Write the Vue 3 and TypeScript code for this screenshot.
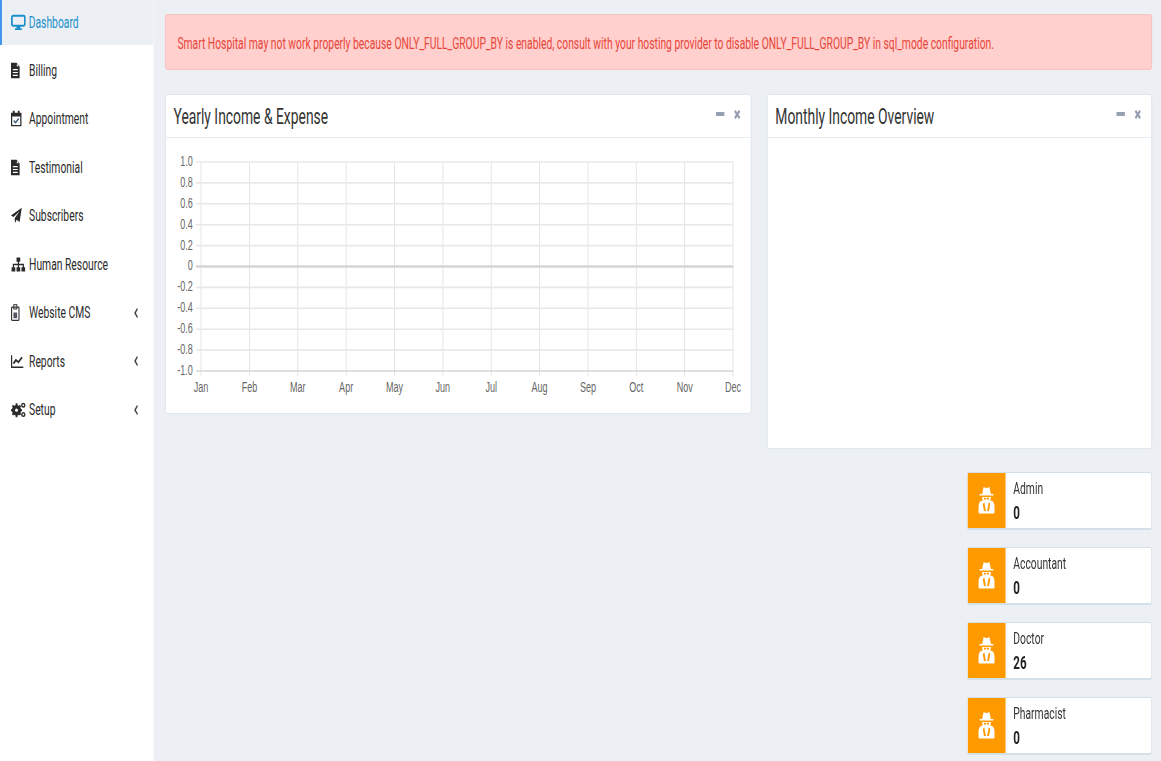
<script setup lang="ts">
const S = 0.645
const px = (x: number) => x / S
type Item = { label: string; icon: string; arrow?: boolean; active?: boolean }
const menu: Item[] = [
  { label: 'Dashboard', icon: 'desktop', active: true },
  { label: 'Billing', icon: 'file' },
  { label: 'Appointment', icon: 'calendar' },
  { label: 'Testimonial', icon: 'file' },
  { label: 'Subscribers', icon: 'plane' },
  { label: 'Human Resource', icon: 'sitemap' },
  { label: 'Website CMS', icon: 'badge', arrow: true },
  { label: 'Reports', icon: 'chart', arrow: true },
  { label: 'Setup', icon: 'gears', arrow: true }
]
const stats = [
  { label: 'Admin', value: '0' },
  { label: 'Accountant', value: '0' },
  { label: 'Doctor', value: '26' },
  { label: 'Pharmacist', value: '0' }
]
const months = ['Jan', 'Feb', 'Mar', 'Apr', 'May', 'Jun', 'Jul', 'Aug', 'Sep', 'Oct', 'Nov', 'Dec']
const yLabels = ['1.0', '0.8', '0.6', '0.4', '0.2', '0', '-0.2', '-0.4', '-0.6', '-0.8', '-1.0']
const x0 = px(201 - 165.7)
const xStep = px(48.36)
const y0 = 24
const yStep = 20.9
const monthX = months.map((m, i) => ({ m, x: x0 + i * xStep }))
const labelY = yLabels.map((t, i) => ({ t, y: y0 + i * yStep }))
const xEnd = x0 + 11 * xStep
const yEnd = y0 + 10 * yStep
const tickLeft = px(196 - 165.7)
</script>

<template>
  <div class="viewport">
    <div class="page">
      <aside class="sidebar">
        <a v-for="item in menu" :key="item.label" class="nav" :class="{ active: item.active }">
          <svg class="nav-icon" viewBox="0 0 24 24" preserveAspectRatio="none">
            <template v-if="item.icon === 'desktop'">
              <rect x="1.500" y="2.500" width="21" height="14" rx="2" fill="none" stroke="currentColor" stroke-width="2.800" />
              <path d="M9 17h6v3h2.500v2.500h-11V20H9z" fill="currentColor" />
            </template>
            <template v-else-if="item.icon === 'file'">
              <path fill-rule="evenodd" fill="currentColor" d="M0 1h9l5 5v17H0zM3 10v1.600h8V10zM3 14v1.600h8V14zM3 18v1.600h8V18zM9.500 2.500V6H13z" />
            </template>
            <template v-else-if="item.icon === 'calendar'">
              <path fill-rule="evenodd" fill="currentColor" d="M0 4h3V1h3v3h5V1h3v3h3v19H0zM2 9v12h13V9z" />
              <path d="M4.500 15l3 3 5-6" fill="none" stroke="#33526e" stroke-width="2" />
            </template>
            <template v-else-if="item.icon === 'plane'">
              <path fill="currentColor" d="M17.500 1 14 21l-5-3-2.500 5-.5-7L14 6 4 14l-4-2z" />
            </template>
            <template v-else-if="item.icon === 'sitemap'">
              <path fill="currentColor" d="M9 2h6v6h-2v3h8v5h2v6h-6v-6h2v-3h-6v3h2v6H9v-6h2v-3H5v3h2v6H1v-6h2v-5h8V8H9z" />
            </template>
            <template v-else-if="item.icon === 'badge'">
              <rect x="1" y="4.500" width="12" height="18.500" rx="1" fill="none" stroke="#333" stroke-width="1.800" />
              <rect x="4.500" y="1" width="5" height="6" fill="none" stroke="#333" stroke-width="1.500" />
              <path fill="#556" d="M4 12h6v8H4z" />
            </template>
            <template v-else-if="item.icon === 'chart'">
              <path fill="currentColor" d="M0 3h2v16h18v2H0z" />
              <path d="M4 15l4-5 4 3 6-7" fill="none" stroke="currentColor" stroke-width="2.600" />
            </template>
            <template v-else>
              <circle cx="9" cy="13" r="5.500" fill="none" stroke="currentColor" stroke-width="4" />
              <path d="M9 3v20M0 13h18M2.500 6.500l13 13M15.500 6.500l-13 13" stroke="currentColor" stroke-width="3" />
              <circle cx="9" cy="13" r="2.300" fill="#fff" />
              <circle cx="20" cy="6" r="2.500" fill="none" stroke="currentColor" stroke-width="2.200" />
              <circle cx="20" cy="19" r="2.500" fill="none" stroke="currentColor" stroke-width="2.200" />
            </template>
          </svg>
          <span class="nav-label">{{ item.label }}</span>
          <svg v-if="item.arrow" class="nav-arrow" viewBox="0 0 10 14">
            <path d="M7.500 2 3 7l4.500 5" fill="none" stroke="currentColor" stroke-width="2.200" />
          </svg>
        </a>
      </aside>

      <main class="content">
        <div class="alert">Smart Hospital may not work properly because ONLY_FULL_GROUP_BY is enabled, consult with your hosting provider to disable ONLY_FULL_GROUP_BY in sql_mode configuration.</div>

        <div class="columns">
          <section class="box box-yearly">
            <header class="box-head">
              <h3>Yearly Income &amp; Expense</h3>
              <div class="tools">
                <span class="minus"></span>
                <svg class="times" viewBox="0 0 12 12"><path d="M2 2l8 8M10 2l-8 8" stroke="currentColor" stroke-width="3.200" /></svg>
              </div>
            </header>
            <svg class="chart" viewBox="0 0 906 276">
              <line v-for="p in monthX" :key="p.m" :x1="p.x" :x2="p.x" :y1="y0" :y2="yEnd + 5" stroke="#e2e2e2" stroke-width="1.400" />
              <line v-for="(p, i) in labelY" :key="p.t" :x1="tickLeft" :x2="xEnd" :y1="p.y" :y2="p.y"
                :stroke="i === 5 || i === 10 ? '#d4d4d4' : '#e8e8e8'" :stroke-width="i === 5 ? 2.500 : 1.600" />
              <text v-for="p in labelY" :key="'l' + p.t" :x="tickLeft - 5" :y="p.y + 4" text-anchor="end" class="tick">{{ p.t }}</text>
              <text v-for="p in monthX" :key="'m' + p.m" :x="p.x" :y="yEnd + 21" text-anchor="middle" class="tick">{{ p.m }}</text>
            </svg>
          </section>

          <div class="right-col">
            <section class="box box-monthly">
              <header class="box-head">
                <h3>Monthly Income Overview</h3>
                <div class="tools">
                  <span class="minus"></span>
                  <svg class="times" viewBox="0 0 12 12"><path d="M2 2l8 8M10 2l-8 8" stroke="currentColor" stroke-width="3.200" /></svg>
                </div>
              </header>
            </section>
            <div class="stats">
              <div v-for="s in stats" :key="s.label" class="stat">
                <div class="stat-icon">
                  <svg viewBox="0 0 24 28" preserveAspectRatio="none">
                    <path fill="#fff" fill-rule="evenodd" d="M8 1c1.500.6 2.600.9 4 .9S14.500 1.600 16 1l2 7h3.500v1.500h-19V8H6zM6 11h12c.2 1.500-.3 2.500-1.200 3.300l2.700.7c2.500.7 3.500 3 3.500 6v5c0 1-.7 1.500-1.500 1.500H2.500C1.700 27.500 1 27 1 26v-5c0-3 1-5.300 3.500-6l2.700-.7C6.300 13.500 5.800 12.500 6 11zM8.500 11.700v1.800h3v-1.800zM12.500 11.700v1.800h3v-1.800zM9 16.500l2.200 8.500H8.500l-1.700-7zM15 16.500l2.200 1-1.700 7.500h-2.700z" />
                  </svg>
                </div>
                <div class="stat-body">
                  <div class="stat-label">{{ s.label }}</div>
                  <div class="stat-value">{{ s.value }}</div>
                </div>
              </div>
            </div>
          </div>
        </div>
      </main>
    </div>
  </div>
</template>

<style>
html, body { margin: 0; background: #ecf0f5; }
</style>

<style scoped>
.viewport { width: 1161px; height: 761px; overflow: hidden; background: #ecf0f5; }
.page {
  width: 1800px; height: 761px; display: flex;
  transform: scaleX(0.645); transform-origin: 0 0;
  font-family: Roboto, "Liberation Sans", sans-serif; font-size: 16px; color: #222;
  filter: blur(0.35px);
}
.sidebar { width: 238px; flex: none; background: #fff; height: 761px; }
.nav { display: flex; align-items: center; height: 48.500px; padding-left: 17px; box-sizing: border-box; color: #2a2a2a; }
.nav:first-child { height: 45px; background: #ecf0f5; color: #1a8fc9; border-left: 3.500px solid #3f94f0; padding-left: 13.500px; margin-bottom: 1px; }
.nav-icon { width: 23px; height: 17px; flex: none; margin-right: 5px; }
.nav-label { flex: 1; }
.nav-arrow { width: 10px; height: 12px; margin-right: 22px; color: #444; }
.content { flex: 1; min-width: 0; padding: 14px 14px 0 18px; }
.alert { height: 56px; display: flex; align-items: center; box-sizing: border-box; padding: 2px 0 0 18px; background: #ffd0cd; border: 1px solid #fbbcb8; border-radius: 3px; color: #e8453a; font-size: 16px; }
.columns { display: flex; gap: 24.500px; margin-top: 24px; align-items: flex-start; }
.box { background: #fff; border: 1px solid #d9e2ea; border-radius: 3px; box-sizing: border-box; }
.box-yearly { width: 908.500px; height: 320px; }
.box-monthly { height: 355px; }
.right-col { flex: 1; min-width: 0; }
.box-head { height: 43px; display: flex; align-items: center; justify-content: space-between; padding: 0 14px 0 12px; border-bottom: 1px solid #e6ecf1; box-sizing: border-box; }
h3 { margin: 0; font-size: 21.500px; font-weight: 400; color: #333; }
.tools { display: flex; align-items: center; gap: 13px; padding-bottom: 4px; color: #97a0b3; }
.minus { width: 13px; height: 4px; background: currentColor; display: block; }
.times { width: 14px; height: 11px; display: block; }
.chart { display: block; width: 906px; height: 276px; }
.tick { font-size: 14px; fill: #666; font-family: "Liberation Sans", sans-serif; }
.stats { display: flex; flex-direction: column; align-items: flex-end; margin-top: 22.500px; gap: 17px; }
.stat { width: 287px; height: 58px; display: flex; background: #fff; border: 1px solid #d5dfe8; border-bottom-width: 2px; border-radius: 3px; box-sizing: border-box; overflow: hidden; }
.stat-icon { width: 59px; flex: none; background: #ff9900; display: flex; align-items: center; justify-content: center; }
.stat-icon svg { width: 27px; height: 28px; }
.stat-body { padding: 6.500px 0 0 12px; }
.stat-label { font-size: 16px; line-height: 20px; color: #333; }
.stat-value { font-size: 18px; font-weight: 700; line-height: 22px; margin-top: 3px; color: #222; }
</style>
